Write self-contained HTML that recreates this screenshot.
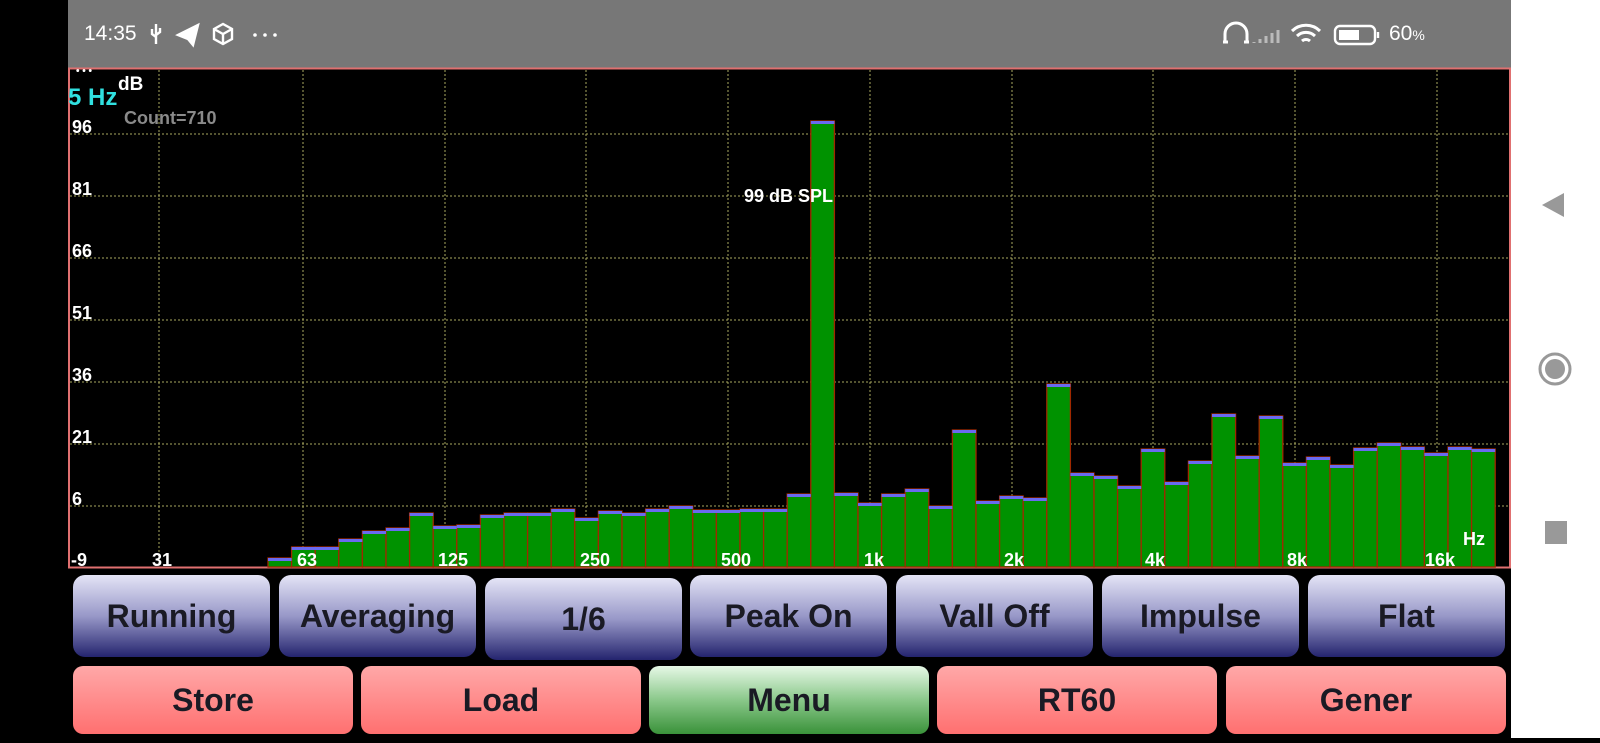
<!DOCTYPE html>
<html><head><meta charset="utf-8"><style>
*{margin:0;padding:0;box-sizing:border-box}
body{width:1600px;height:738px;background:#000;position:relative;overflow:hidden;font-family:"Liberation Sans",sans-serif}
.status{position:absolute;left:68px;top:0;width:1443px;height:68px;background:#777}
.nav{position:absolute;left:1511px;top:0;width:89px;height:738px;background:#fff}
.btn{position:absolute;border-radius:12px;display:flex;align-items:center;justify-content:center;font-size:32px;color:#1a1a24;font-weight:bold}
.b1{top:575px;height:82px;width:197px;background:linear-gradient(#e4e4f6,#9898c8 50%,#24246e)}
.b2{top:666px;height:68px;width:280px;background:linear-gradient(#ffa8a8,#ff7070);border-radius:10px}
.g{background:linear-gradient(#e6f8e6,#8ac88a 50%,#3a923a)}
</style></head><body>
<div class="status">
<div style="position:absolute;left:16px;top:22px;color:#fff;font-size:21px">14:35</div>
<svg style="position:absolute;left:0;top:0" width="1443" height="68" fill="none" stroke="#fff" stroke-width="2.4">
<path d="M88 24v20M84 29v5l4 3M92 28v4l-4 3" />
<path d="M110 35l20-10-5 20-5-6z" fill="#fff"/>
<path d="M146 29l9-5 9 5v10l-9 5-9-5zM146 29l9 5 9-5M155 34v10"/>
<circle cx="187" cy="35" r="1.8" fill="#fff" stroke="none"/><circle cx="197" cy="35" r="1.8" fill="#fff" stroke="none"/><circle cx="207" cy="35" r="1.8" fill="#fff" stroke="none"/>
<path d="M1157 42v-8a11 11 0 0 1 22 0v8M1155 42h5M1176 42h5" stroke-width="3"/>
<path d="M1186 43v-1M1192 43v-4M1198 43v-7M1204 43v-10M1210 43v-13" stroke="#bbb" stroke-width="3"/>
<path d="M1224 31a20 20 0 0 1 28 0M1229 36a13 13 0 0 1 18 0M1234 41a6 6 0 0 1 8 0" stroke-width="3"/>
<rect x="1267" y="26" width="40" height="18" rx="5"/><rect x="1271" y="30" width="20" height="10" fill="#fff" stroke="none"/><path d="M1310 32v6"/>
</svg>
<div style="position:absolute;left:1321px;top:22px;color:#fff;font-size:21px">60<span style="font-size:14px">%</span></div>
</div>
<div class="nav"><svg width="89" height="738" fill="#999">
<path d="M31 205l22-12v24z"/><circle cx="44" cy="369" r="15" fill="none" stroke="#999" stroke-width="3"/><circle cx="44" cy="369" r="10"/><rect x="34" y="521" width="22" height="23"/>
</svg></div>
<svg style="position:absolute;left:0;top:0" width="1600" height="738">
<rect x="69" y="68.5" width="1441" height="499" fill="#000" stroke="#e07070" stroke-width="2"/>
<g stroke="#a8a860" stroke-width="1" stroke-dasharray="2,2">
<path d="M70 134H1509M70 196H1509M70 258H1509M70 320H1509M70 382H1509M70 444H1509M70 506H1509"/>
<path d="M159 70V566M303 70V566M445 70V566M586 70V566M728 70V566M870 70V566M1012 70V566M1153 70V566M1295 70V566M1437 70V566"/>
</g>
<g fill="#009200" stroke="#a02800" stroke-width="1.3">
<rect x="268" y="558" width="23.6" height="9"/><rect x="291.6" y="547" width="23.6" height="20"/><rect x="315.2" y="547" width="23.6" height="20"/><rect x="338.8" y="539" width="23.6" height="28"/><rect x="362.4" y="531" width="23.6" height="36"/><rect x="386" y="528" width="23.6" height="39"/><rect x="409.6" y="513" width="23.6" height="54"/><rect x="433.2" y="526" width="23.6" height="41"/><rect x="456.8" y="525" width="23.6" height="42"/><rect x="480.4" y="515" width="23.6" height="52"/><rect x="504" y="513" width="23.6" height="54"/><rect x="527.6" y="513" width="23.6" height="54"/><rect x="551.2" y="509" width="23.6" height="58"/><rect x="574.8" y="518" width="23.6" height="49"/><rect x="598.4" y="511" width="23.6" height="56"/><rect x="622" y="513" width="23.6" height="54"/><rect x="645.6" y="509" width="23.6" height="58"/><rect x="669.2" y="506" width="23.6" height="61"/><rect x="692.8" y="510" width="23.6" height="57"/><rect x="716.4" y="510" width="23.6" height="57"/><rect x="740" y="509" width="23.6" height="58"/><rect x="763.6" y="509" width="23.6" height="58"/><rect x="787.2" y="494" width="23.6" height="73"/><rect x="810.8" y="121" width="23.6" height="446"/><rect x="834.4" y="493" width="23.6" height="74"/><rect x="858" y="503" width="23.6" height="64"/><rect x="881.6" y="494" width="23.6" height="73"/><rect x="905.2" y="489" width="23.6" height="78"/><rect x="928.8" y="506" width="23.6" height="61"/><rect x="952.4" y="430" width="23.6" height="137"/><rect x="976" y="501" width="23.6" height="66"/><rect x="999.6" y="496" width="23.6" height="71"/><rect x="1023.2" y="498" width="23.6" height="69"/><rect x="1046.8" y="384" width="23.6" height="183"/><rect x="1070.4" y="473" width="23.6" height="94"/><rect x="1094" y="476" width="23.6" height="91"/><rect x="1117.6" y="486" width="23.6" height="81"/><rect x="1141.2" y="449" width="23.6" height="118"/><rect x="1164.8" y="482" width="23.6" height="85"/><rect x="1188.4" y="461" width="23.6" height="106"/><rect x="1212" y="414" width="23.6" height="153"/><rect x="1235.6" y="456" width="23.6" height="111"/><rect x="1259.2" y="416" width="23.6" height="151"/><rect x="1282.8" y="463" width="23.6" height="104"/><rect x="1306.4" y="457" width="23.6" height="110"/><rect x="1330" y="465" width="23.6" height="102"/><rect x="1353.6" y="448" width="23.6" height="119"/><rect x="1377.2" y="443" width="23.6" height="124"/><rect x="1400.8" y="447" width="23.6" height="120"/><rect x="1424.4" y="453" width="23.6" height="114"/><rect x="1448" y="447" width="23.6" height="120"/><rect x="1471.6" y="449" width="23.6" height="118"/>
</g>
<g fill="#6a6af0">
<rect x="268" y="558" width="23.6" height="3"/><rect x="291.6" y="547" width="47.2" height="3"/><rect x="338.8" y="539" width="23.6" height="3"/><rect x="362.4" y="531" width="23.6" height="3"/><rect x="386" y="528" width="23.6" height="3"/><rect x="409.6" y="513" width="23.6" height="3"/><rect x="433.2" y="526" width="23.6" height="3"/><rect x="456.8" y="525" width="23.6" height="3"/><rect x="480.4" y="515" width="23.6" height="3"/><rect x="504" y="513" width="47.2" height="3"/><rect x="551.2" y="509" width="23.6" height="3"/><rect x="574.8" y="518" width="23.6" height="3"/><rect x="598.4" y="511" width="23.6" height="3"/><rect x="622" y="513" width="23.6" height="3"/><rect x="645.6" y="509" width="23.6" height="3"/><rect x="669.2" y="506" width="23.6" height="3"/><rect x="692.8" y="510" width="47.2" height="3"/><rect x="740" y="509" width="47.2" height="3"/><rect x="787.2" y="494" width="23.6" height="3"/><rect x="810.8" y="121" width="23.6" height="3"/><rect x="834.4" y="493" width="23.6" height="3"/><rect x="858" y="503" width="23.6" height="3"/><rect x="881.6" y="494" width="23.6" height="3"/><rect x="905.2" y="489" width="23.6" height="3"/><rect x="928.8" y="506" width="23.6" height="3"/><rect x="952.4" y="430" width="23.6" height="3"/><rect x="976" y="501" width="23.6" height="3"/><rect x="999.6" y="496" width="23.6" height="3"/><rect x="1023.2" y="498" width="23.6" height="3"/><rect x="1046.8" y="384" width="23.6" height="3"/><rect x="1070.4" y="473" width="23.6" height="3"/><rect x="1094" y="476" width="23.6" height="3"/><rect x="1117.6" y="486" width="23.6" height="3"/><rect x="1141.2" y="449" width="23.6" height="3"/><rect x="1164.8" y="482" width="23.6" height="3"/><rect x="1188.4" y="461" width="23.6" height="3"/><rect x="1212" y="414" width="23.6" height="3"/><rect x="1235.6" y="456" width="23.6" height="3"/><rect x="1259.2" y="416" width="23.6" height="3"/><rect x="1282.8" y="463" width="23.6" height="3"/><rect x="1306.4" y="457" width="23.6" height="3"/><rect x="1330" y="465" width="23.6" height="3"/><rect x="1353.6" y="448" width="23.6" height="3"/><rect x="1377.2" y="443" width="23.6" height="3"/><rect x="1400.8" y="447" width="23.6" height="3"/><rect x="1424.4" y="453" width="23.6" height="3"/><rect x="1448" y="447" width="23.6" height="3"/><rect x="1471.6" y="449" width="23.6" height="3"/>
</g>
<g fill="#fff" font-family="Liberation Sans,sans-serif" font-weight="bold" font-size="18">
<text x="72" y="133">96</text><text x="72" y="195">81</text><text x="72" y="257">66</text><text x="72" y="319">51</text><text x="72" y="381">36</text><text x="72" y="443">21</text><text x="72" y="505">6</text>
<text x="71" y="566">-9</text><text x="152" y="566">31</text><text x="297" y="566">63</text><text x="438" y="566">125</text><text x="580" y="566">250</text><text x="721" y="566">500</text><text x="864" y="566">1k</text><text x="1004" y="566">2k</text><text x="1145" y="566">4k</text><text x="1287" y="566">8k</text><text x="1425" y="566">16k</text>
<text x="1463" y="545">Hz</text>
<text x="744" y="202">99 dB SPL</text>
<text x="118" y="90" font-size="19">dB</text>
<text x="124" y="124" fill="#8a8a8a" font-size="18">Count=710</text>
<text x="68" y="105" fill="#30e0e0" font-size="24">5 Hz</text>
<text x="76" y="74" font-size="10">• • •</text>
</g>
</svg>
<div class="btn b1" style="left:73px">Running</div>
<div class="btn b1" style="left:279px">Averaging</div>
<div class="btn b1" style="left:485px;top:578px">1/6</div>
<div class="btn b1" style="left:690px">Peak On</div>
<div class="btn b1" style="left:896px">Vall Off</div>
<div class="btn b1" style="left:1102px">Impulse</div>
<div class="btn b1" style="left:1308px">Flat</div>
<div class="btn b2" style="left:73px">Store</div>
<div class="btn b2" style="left:361px">Load</div>
<div class="btn b2 g" style="left:649px">Menu</div>
<div class="btn b2" style="left:937px">RT60</div>
<div class="btn b2" style="left:1226px">Gener</div>
</body></html>
